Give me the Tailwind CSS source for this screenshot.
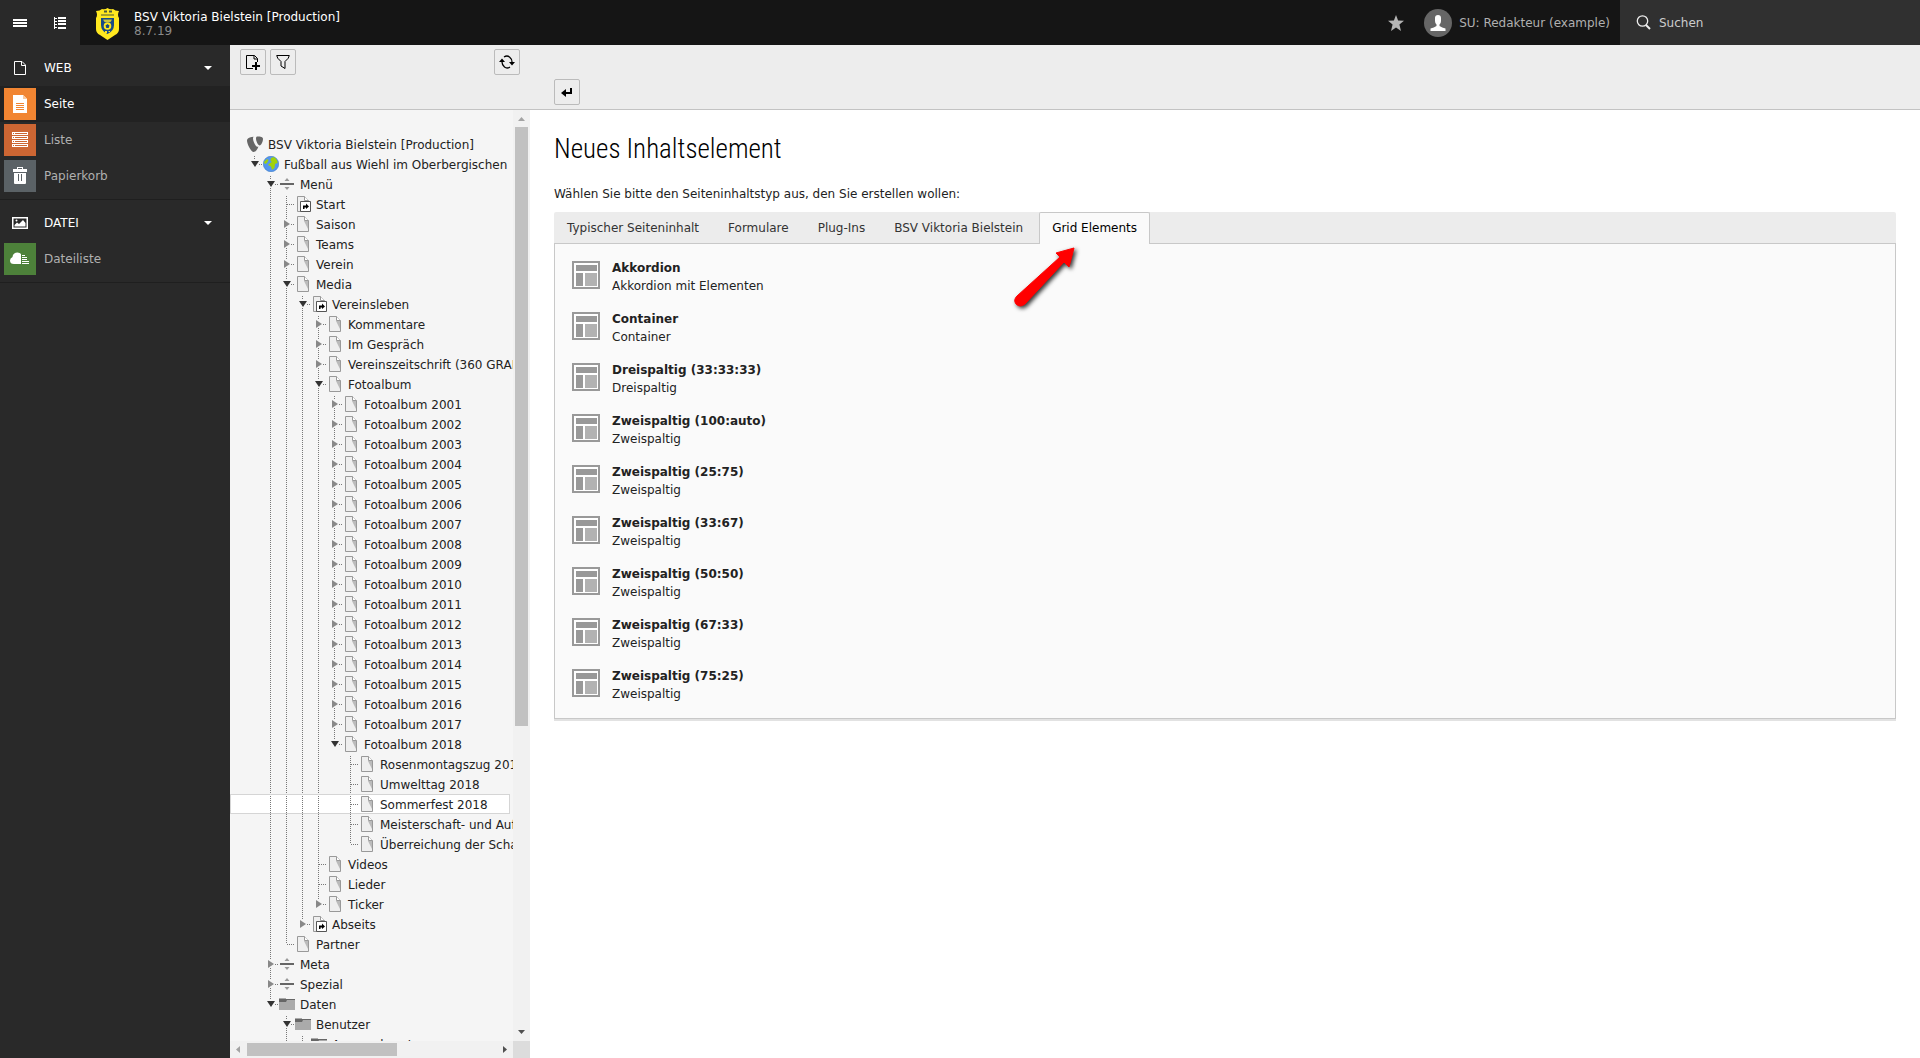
<!DOCTYPE html>
<html lang="de">
<head>
  <meta charset="UTF-8">
  <meta name="viewport" content="width=device-width, initial-scale=1.0">
  <title>BSV Viktoria Bielstein [Production]</title>
  <script src="https://cdn.jsdelivr.net/npm/@tailwindcss/browser@4"></script>
</head>
<body class="h-screen overflow-hidden flex flex-col bg-white font-[Verdana,'DejaVu_Sans',sans-serif] text-[12px] leading-[18px] text-[#222]">

  <!-- top bar -->
  <header class="h-[45px] shrink-0 flex items-stretch bg-[#151515] text-white">
    <div class="w-20 flex bg-[#292929]">
      <button aria-label="Menü" class="w-10 flex items-center justify-center">
        <svg width="14" height="10" fill="#fff" shape-rendering="crispEdges"><path d="M0 1h14v2H0zM0 4h14v2H0zM0 7h14v2H0z"/></svg>
      </button>
      <button aria-label="Seitenbaum" class="w-10 flex items-center justify-center">
        <svg width="12" height="12" fill="#fff" shape-rendering="crispEdges"><path d="M0 0h1v12H0zM1 1h2v1H1zM1 4h2v1H1zM1 7h2v1H1zM1 10h2v1H1zM4 0h8v2H4zM4 3h8v2H4zM4 6h8v2H4zM4 10h8v2H4z"/></svg>
      </button>
    </div>
    <a href="#" class="flex items-center gap-[14px] pl-[15px] pt-[2px]">
      <svg width="25" height="32" viewBox="0 0 25 32">
        <path d="M1 3Q5 3 7 1Q10 2 12.500 0Q15 2 18 1Q20 3 24 3Q22 7 24 10V21Q24 25 20 27L12.500 32L5 27Q1 25 1 21V10Q3 7 1 3Z" fill="#ffe81f"/>
        <path d="M9 2.500h3v2H9zM14 2.500h3v2h-3zM6 6.500h13v1H6z" fill="#4b5a3c"/>
        <path d="M6 10H19V17Q19 23 12.500 26Q6 23 6 17Z" fill="#184a86"/>
        <path d="M8 11.500h9l-1.500 2.500H9.500z" fill="#c9c440"/>
        <circle cx="12.500" cy="18" r="3.800" fill="#ffe81f"/>
        <path d="M12.500 16l2 1.500-.8 2.400h-2.400l-.8-2.400z" fill="#184a86"/>
        <path d="M10 23h2v2h-2zM13.500 23h1.500v1h-1.500z" fill="#ffe81f"/>
      </svg>
      <span class="flex flex-col leading-[14px]">
        <span>BSV Viktoria Bielstein [Production]</span>
        <span class="text-[#8a8a8a]">8.7.19</span>
      </span>
    </a>
    <div class="ml-auto flex items-center">
      <button aria-label="Lesezeichen" class="w-10 flex justify-center mr-2">
        <svg width="16" height="16" viewBox="0 0 16 16" fill="#b5b5b5"><path d="M8 0l2.100 5.500 5.900.2-4.600 3.700L13 16 8 12.600 3 16l1.600-6.600L0 5.700l5.900-.2z"/></svg>
      </button>
      <button class="flex items-center gap-[7px] pr-[10px] text-[#b0b0b0]">
        <svg width="28" height="28" viewBox="0 0 28 28">
          <circle cx="14" cy="14" r="14" fill="#666"/>
          <path d="M11 9Q11 6 14 6T17 9V12Q17 14 15.500 15.500V17Q18 18.500 21.500 19.500V22H6.500V19.500Q10 18.500 12.500 17V15.500Q11 14 11 12Z" fill="#fff"/>
        </svg>
        <span>SU: Redakteur (example)</span>
      </button>
    </div>
    <label class="w-[300px] flex items-center gap-2 pl-4 bg-[#303030]">
      <svg width="15" height="15" viewBox="0 0 15 15" fill="none" stroke="#eee"><circle cx="6.500" cy="6" r="5.200" stroke-width="1.300"/><path d="M10 10l4 4" stroke-width="2"/></svg>
      <input type="text" placeholder="Suchen" aria-label="Suchen" class="min-w-0 flex-1 bg-transparent outline-none placeholder:text-[#ccc]">
    </label>
  </header>

  <div class="flex flex-1 min-h-0">

    <!-- module menu -->
    <nav class="w-[230px] shrink-0 bg-[#292929] text-[#b0b0b0]">
      <section class="pb-[5px] border-b border-[#1f1f1f]">
        <button class="w-full h-[41px] pt-1 flex items-center text-white">
          <span class="w-[44px] flex pl-[14px]"><svg width="12" height="14" fill="none" stroke="#fff"><path d="M.5.5H8L11.500 4V13.500H.5ZM7.500.5V4.500H11.500"/></svg></span>
          WEB
          <svg class="ml-auto mr-[18px]" width="8" height="4" fill="#fff"><path d="M0 0h8L4 4z"/></svg>
        </button>
        <a href="#" class="h-9 flex items-center pl-1 gap-2 bg-[#222] text-white">
          <svg width="32" height="32" shape-rendering="crispEdges"><path d="M0 0h32v32H0z" fill="#f18532"/><path d="M9 7h10l4 4v14H9z" fill="#fff"/><path d="M19 7v4h4z" fill="#f9c9a0"/><path d="M12 15h8v1h-8zM12 17h8v1h-8zM12 19h8v1h-8zM12 21h8v1h-8z" fill="#f18532"/></svg>
          Seite
        </a>
        <a href="#" class="h-9 flex items-center pl-1 gap-2">
          <svg width="32" height="32" shape-rendering="crispEdges"><path d="M0 0h32v32H0z" fill="#cd6633"/><path d="M8 8h16v3H8zM8 12h16v3H8zM8 16h16v3H8zM8 20h16v3H8z" fill="#fff"/><path d="M11 9h12v1H11zM11 13h12v1H11zM11 17h12v1H11zM11 21h12v1H11zM9 9h1v1H9zM9 13h1v1H9zM9 17h1v1H9zM9 21h1v1H9z" fill="#cd6633"/></svg>
          Liste
        </a>
        <a href="#" class="h-9 flex items-center pl-1 gap-2">
          <svg width="32" height="32"><path d="M0 0h32v32H0z" fill="#5b6266"/><path d="M9 9h4V7h6v2h4v3H9zM10 13h12v10q0 1-1 1H11q-1 0-1-1z" fill="#fff"/><path d="M14 8h4v1h-4zM14 14h1v7h-1zM17 14h1v7h-1z" fill="#5b6266"/></svg>
          Papierkorb
        </a>
      </section>
      <section class="pb-[5px] border-b border-[#1f1f1f]">
        <button class="w-full h-[41px] pt-1 flex items-center text-white">
          <span class="w-[44px] flex pl-3"><svg width="16" height="12" fill="#fff"><path d="M0 0h16v12H0zM1.500 1.500v9h13v-9z" fill-rule="evenodd"/><path d="M2.500 9.500V8L5 5.500 7 7l4-4 2.500 3v3.500z"/><circle cx="4.500" cy="3.500" r="1"/></svg></span>
          DATEI
          <svg class="ml-auto mr-[18px]" width="8" height="4" fill="#fff"><path d="M0 0h8L4 4z"/></svg>
        </button>
        <a href="#" class="h-9 flex items-center pl-1 gap-2">
          <svg width="32" height="32"><path d="M0 0h32v32H0z" fill="#4d813a"/><path d="M17 21H10Q6 21 6 17.500Q6 15 8.500 14Q9 9.500 13.500 9.500Q16 9.500 17 11Z" fill="#fff"/><path d="M18 12h3v1h-3zM18 14h5v1h-5zM18 16h5v1h-5zM18 18h7v1h-7zM18 20h7v1h-7z" fill="#fff"/></svg>
          Dateiliste
        </a>
      </section>
    </nav>

    <!-- page tree -->
    <aside class="w-[300px] shrink-0 flex flex-col">
      <div class="h-[65px] shrink-0 flex items-start gap-1 pt-1 pl-[10px] pr-[10px] bg-[#ededed] border-b border-[#c3c3c3]">
        <button aria-label="Neue Seite" class="size-[26px] flex items-center justify-center border border-[#bbb] rounded-xs">
          <svg width="14" height="16" fill="none" stroke="#000"><path d="M7 14.500H.5V1.500H8.500L11.500 4.500V8M8 1.500V5H11.500"/><path d="M10 8v8M6 12h8" stroke-width="2"/></svg>
        </button>
        <button aria-label="Filter" class="size-[26px] flex items-center justify-center border border-[#bbb] rounded-xs">
          <svg width="14" height="14" fill="none" stroke="#000"><path d="M.7.5H13.300Q13.300 3 9 6.500V13.500L5 11V6.500Q.7 3 .7.500Z"/></svg>
        </button>
        <button aria-label="Neu laden" class="ml-auto size-[26px] flex items-center justify-center border border-[#bbb] rounded-xs">
          <svg width="16" height="14" fill="none" stroke="#000" stroke-width="1.300"><path d="M5 2Q8 0 10.500 2T13 7M11 12Q8 14 5.500 12T3 7"/><path d="M10 7h6l-3 3.500zM0 7h6L3 3.500z" fill="#000" stroke="none"/></svg>
        </button>
      </div>
      <div class="flex-1 min-h-0 flex bg-[#f5f5f5]">
        <ul id="tree" class="flex-1 min-w-0 overflow-hidden pt-6"></ul>
        <div class="w-[17px] flex flex-col items-center bg-[#f1f1f1]">
          <svg class="shrink-0" width="17" height="17" fill="#a3a3a3"><path d="M5 11h7L8.500 7z"/></svg>
          <div class="w-[13px] h-[64.300%] bg-[#c1c1c1]"></div>
          <svg class="shrink-0 mt-auto" width="17" height="17" fill="#505050"><path d="M5 6h7L8.500 10z"/></svg>
        </div>
      </div>
      <div class="h-[17px] shrink-0 flex bg-[#f1f1f1]">
        <svg class="shrink-0" width="17" height="17" fill="#a3a3a3"><path d="M10 5v7L6 8.500z"/></svg>
        <div class="w-[150px] h-[13px] mt-[2px] bg-[#c1c1c1]"></div>
        <svg class="shrink-0 ml-auto" width="17" height="17" fill="#505050"><path d="M7 5v7l4-3.500z"/></svg>
        <div class="w-[17px] bg-[#dcdcdc]"></div>
      </div>
    </aside>

    <!-- content -->
    <main class="flex-1 min-w-0">
      <div class="h-[65px] flex items-end pb-1 pl-6 bg-[#ededed] border-b border-[#c3c3c3]">
        <button aria-label="Zurück" class="size-[26px] flex items-center justify-center border border-[#bbb] rounded-xs">
          <svg width="12" height="10"><path d="M9 1h2v6H5v3L0 6l5-4v3h4z"/></svg>
        </button>
      </div>
      <div class="px-6">
        <h1 class="pt-[23px] text-[27px] leading-[32px] text-black font-light font-['Roboto_Condensed','Open_Sans_Condensed',Roboto,sans-serif]">Neues Inhaltselement</h1>
        <p class="pt-5 pb-[9px]">Wählen Sie bitte den Seiteninhaltstyp aus, den Sie erstellen wollen:</p>
        <div role="tablist" class="flex gap-[3px] h-8 bg-[#ececec] border-b border-[#c8c8c8] rounded-t-xs text-[#333]">
          <button role="tab" class="px-[13px]">Typischer Seiteninhalt</button>
          <button role="tab" class="px-[13px]">Formulare</button>
          <button role="tab" class="px-[13px]">Plug-Ins</button>
          <button role="tab" class="px-[13px]">BSV Viktoria Bielstein</button>
          <button role="tab" aria-selected="true" class="px-3 pb-[2px] -mb-px bg-[#fafafa] border border-b-0 border-[#c8c8c8] rounded-t-xs text-black">Grid Elements</button>
        </div>
        <ul id="elements" class="flex flex-col gap-[15px] pt-[15px] pb-[15px] pl-[17px] bg-[#fafafa] border border-t-0 border-[#c8c8c8] shadow-[0_2px_0_#e2e2e2]"></ul>
      </div>
    </main>
  </div>

  <!-- pointer arrow over the tab panel -->
  <svg class="absolute left-[1010px] top-[241px] drop-shadow-[2px_2px_2px_rgba(0,0,0,0.8)]" width="70" height="72" fill="red">
    <path d="M64 7L59 26L54 21L15 63Q10 67 6 63Q3 59 7 55L50 16L46 12Z" stroke="red" stroke-linejoin="round"/>
  </svg>

  <script>
    // depth, icon, toggle state (o = open, c = closed, '' = leaf), label
    const nodes = [
      [0, 'typo3', '', 'BSV Viktoria Bielstein [Production]'],
      [1, 'globe', 'o', 'Fußball aus Wiehl im Oberbergischen'],
      [2, 'spacer', 'o', 'Menü'],
      [3, 'link', '', 'Start'],
      [3, 'page', 'c', 'Saison'],
      [3, 'page', 'c', 'Teams'],
      [3, 'page', 'c', 'Verein'],
      [3, 'page', 'o', 'Media'],
      [4, 'link', 'o', 'Vereinsleben'],
      [5, 'page', 'c', 'Kommentare'],
      [5, 'page', 'c', 'Im Gespräch'],
      [5, 'page', 'c', 'Vereinszeitschrift (360 GRAD)'],
      [5, 'page', 'o', 'Fotoalbum']
    ];
    for (let year = 2001; year <= 2018; year++) {
      nodes.push([6, 'page', year === 2018 ? 'o' : 'c', `Fotoalbum ${year}`]);
    }
    nodes.push(
      [7, 'page', '', 'Rosenmontagszug 2018'],
      [7, 'page', '', 'Umwelttag 2018'],
      [7, 'page', '', 'Sommerfest 2018'],
      [7, 'page', '', 'Meisterschaft- und Aufstieg'],
      [7, 'page', '', 'Überreichung der Schals'],
      [5, 'page', '', 'Videos'],
      [5, 'page', '', 'Lieder'],
      [5, 'page', 'c', 'Ticker'],
      [4, 'link', 'c', 'Abseits'],
      [3, 'page', '', 'Partner'],
      [2, 'spacer', 'c', 'Meta'],
      [2, 'spacer', 'c', 'Spezial'],
      [2, 'folder', 'o', 'Daten'],
      [3, 'folder', 'o', 'Benutzer'],
      [4, 'folder', '', 'Ansprechpartner'],
      [3, 'folder', '', 'Dateien']
    );

    const sheet = '<path d="M2.500.5H9.500L13.500 4.500V15.500H2.500Z" fill="#efefef" stroke="#999"/><path d="M9 5H13V13Z" fill="#bbb"/><path d="M9.500.5V4.500H13.500" fill="#fff" stroke="#999"/>';
    const icons = {
      typo3: '<path d="M11.500 10.500Q11 10.700 10.500 10.700C8.500 10.700 6 5 6 2.500Q6 1.400 6.600.8C4 1.100 1 2 .5 3Q0 3.600 0 4.500C0 8 4 16 6.800 16 8.500 16 10.500 13.500 11.500 10.500ZM10.500.5C13.500.5 16 1 16 2.800 16 6 14 9.500 12.800 9.500 11 9.500 9 5 9 2.500 9 1 9.600.5 10.500.5Z" fill="#666"/>',
      globe: '<circle cx="8" cy="8" r="7.700" fill="#5595ee" stroke="#3d7cc4" stroke-width=".6"/><path d="M8 2L11 1Q15 4 14.500 7L12 8 11.500 12 9 14 8 10.500 5 9 7 7 9 6 7.500 5ZM1 6L4 3 5.500 4 4 7 2 8Z" fill="#a2d20a"/>',
      spacer: '<path d="M1 7h14v2H1z" fill="#666"/><path d="M5.500 5h5L8 2zM5.500 11h5L8 14z" fill="#999"/>',
      page: sheet,
      link: sheet + '<path d="M5.500 5.500h10v10h-10z" fill="#fff" stroke="#555"/><path d="M8 13V9.500h3V7.500L14 10.500 11 13V11.500H9.500V13z" fill="#000"/>',
      folder: '<path d="M0 3h16v11H0z" fill="#aaa"/><path d="M0 2h7v1H0z" fill="#aaa"/><path d="M0 3h16v1H8L7 6H0z" fill="#666"/>'
    };

    // true when a sibling on this level follows further down
    function continues(index, level) {
      for (let i = index + 1; i < nodes.length; i++) {
        if (nodes[i][0] < level) return false;
        if (nodes[i][0] === level) return true;
      }
      return false;
    }

    function guide(index, level) {
      const [depth, , state] = nodes[index];
      let lines = '';
      if (level < depth) {
        if (continues(index, level)) lines = 'M7.500 0V20';
      } else {
        const top = nodes[index - 1][0] < level ? 2 : 0;
        lines = state ? `M7.500 ${top}V6M12 10.500H16` : `M7.500 ${top}V10M8 10.500H16`;
        if (continues(index, level)) lines += state ? 'M7.500 14V20' : 'M7.500 10V20';
      }
      let arrow = '';
      if (level === depth && state === 'o') arrow = '<path d="M4 7h8L8 13z" fill="#333"/>';
      if (level === depth && state === 'c') arrow = '<path d="M5 6v8l6-4z" fill="#888"/>';
      return `<svg class="shrink-0" width="16" height="20"><path d="${lines}" stroke="#777" stroke-dasharray="1 1" fill="none"/>${arrow}</svg>`;
    }

    document.getElementById('tree').innerHTML = nodes.map(([depth, icon, , label], i) => {
      let guides = '';
      for (let level = 1; level <= depth; level++) guides += guide(i, level);
      const active = label === 'Sommerfest 2018' ? 'bg-white mr-[3px] outline outline-[#d5d5d5] -outline-offset-1' : '';
      return `<li class="h-5 flex items-center pl-[17px] whitespace-nowrap ${active}">${guides}
        <svg class="shrink-0 mr-[5px]" width="16" height="16">${icons[icon]}</svg><a href="#" class="pt-[2px]">${label}</a></li>`;
    }).join('');

    const elements = [
      ['Akkordion', 'Akkordion mit Elementen'],
      ['Container', 'Container'],
      ['Dreispaltig (33:33:33)', 'Dreispaltig'],
      ['Zweispaltig (100:auto)', 'Zweispaltig'],
      ['Zweispaltig (25:75)', 'Zweispaltig'],
      ['Zweispaltig (33:67)', 'Zweispaltig'],
      ['Zweispaltig (50:50)', 'Zweispaltig'],
      ['Zweispaltig (67:33)', 'Zweispaltig'],
      ['Zweispaltig (75:25)', 'Zweispaltig']
    ];
    document.getElementById('elements').innerHTML = elements.map(([title, text]) => `
      <li><a href="#" class="flex items-start gap-3">
        <svg class="shrink-0 mt-[2px]" width="28" height="28" shape-rendering="crispEdges">
          <path d="M0 0h28v28H0z" fill="#999"/><path d="M2 2h24v24H2z" fill="#fff"/>
          <path d="M4 4h21v6H4zM4 12h7v13H4z" fill="#999"/><path d="M13 12h12v13H13z" fill="#b2b2b2"/>
        </svg>
        <span class="flex flex-col"><strong>${title}</strong><span>${text}</span></span>
      </a></li>`).join('');
  </script>
</body>
</html>
